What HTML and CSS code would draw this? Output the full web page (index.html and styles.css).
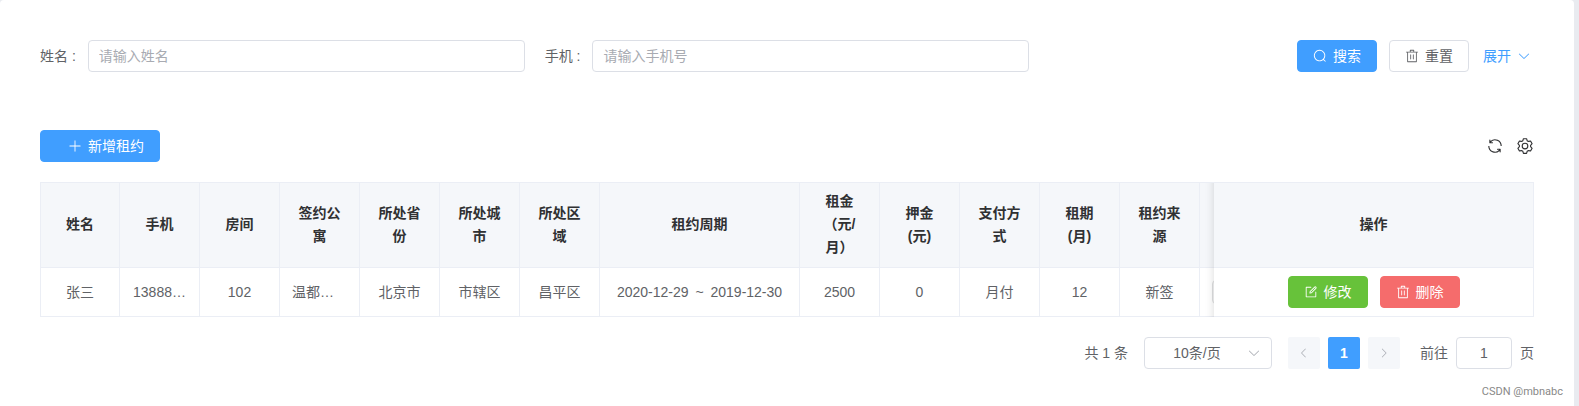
FILE: index.html
```html
<!DOCTYPE html>
<html lang="zh-CN">
<head>
    <meta charset="UTF-8">
    <meta name="viewport" content="width=device-width, initial-scale=1.0">
    <title>租约管理</title>
    <link rel="stylesheet" href="styles.css">
</head>
<body>
    <!-- 图标 -->
    <svg class="icon-defs" aria-hidden="true">
        <symbol id="icon-search" viewBox="0 0 1024 1024"><path d="M795.904 750.72l124.992 124.928a32 32 0 0 1-45.248 45.248L750.656 795.904a416 416 0 1 1 45.248-45.248zM480 832a352 352 0 1 0 0-704 352 352 0 0 0 0 704z"/></symbol>
        <symbol id="icon-delete" viewBox="0 0 1024 1024"><path d="M160 256H96a32 32 0 0 1 0-64h256V95.936a32 32 0 0 1 32-32h256a32 32 0 0 1 32 32V192h256a32 32 0 1 1 0 64h-64v672a32 32 0 0 1-32 32H192a32 32 0 0 1-32-32V256zm448-64v-64H416v64h192zM224 896h576V256H224v640zm192-128a32 32 0 0 1-32-32V416a32 32 0 0 1 64 0v320a32 32 0 0 1-32 32zm192 0a32 32 0 0 1-32-32V416a32 32 0 0 1 64 0v320a32 32 0 0 1-32 32z"/></symbol>
        <symbol id="icon-down" viewBox="0 0 1024 1024"><path d="M831.872 340.864 512 652.672 192.128 340.864a30.592 30.592 0 0 0-42.752 0 29.12 29.12 0 0 0 0 41.6L489.664 714.24a32 32 0 0 0 44.672 0l340.288-331.712a29.12 29.12 0 0 0 0-41.728 30.592 30.592 0 0 0-42.752 0z"/></symbol>
        <symbol id="icon-left" viewBox="0 0 1024 1024"><path d="M609.408 149.376 277.76 489.6a32 32 0 0 0 0 44.672l331.648 340.352a29.12 29.12 0 0 0 41.728 0 30.592 30.592 0 0 0 0-42.752L339.264 511.936l311.872-319.872a30.592 30.592 0 0 0 0-42.688 29.12 29.12 0 0 0-41.728 0z"/></symbol>
        <symbol id="icon-right" viewBox="0 0 1024 1024"><path d="M340.864 149.312a30.592 30.592 0 0 0 0 42.752L652.736 512 340.864 831.872a30.592 30.592 0 0 0 0 42.752 29.12 29.12 0 0 0 41.728 0L714.24 534.336a32 32 0 0 0 0-44.672L382.592 149.376a29.12 29.12 0 0 0-41.728 0z"/></symbol>
        <symbol id="icon-plus" viewBox="0 0 1024 1024"><path d="M480 480V128a32 32 0 0 1 64 0v352h352a32 32 0 1 1 0 64H544v352a32 32 0 1 1-64 0V544H128a32 32 0 0 1 0-64h352z"/></symbol>
        <symbol id="icon-refresh" viewBox="0 0 1024 1024"><path d="M771.776 794.88A384 384 0 0 1 128 512h64a320 320 0 0 0 555.712 216.448H654.72a32 32 0 1 1 0-64h149.056a32 32 0 0 1 32 32v148.928a32 32 0 1 1-64 0v-50.56zM276.288 295.616h92.992a32 32 0 0 1 0 64H220.16a32 32 0 0 1-32-32V178.56a32 32 0 0 1 64 0v50.56A384 384 0 0 1 896.128 512h-64a320 320 0 0 0-555.776-216.384z"/></symbol>
        <symbol id="icon-edit" viewBox="0 0 1024 1024"><path d="M832 512a32 32 0 1 1 64 0v352a32 32 0 0 1-32 32H160a32 32 0 0 1-32-32V160a32 32 0 0 1 32-32h352a32 32 0 0 1 0 64H192v640h640V512z"/><path d="m469.952 554.24 52.8-7.552L847.104 222.4a32 32 0 1 0-45.248-45.248L477.44 501.44l-7.552 52.8zm422.4-422.4a96 96 0 0 1 0 135.808l-331.84 331.84a32 32 0 0 1-18.112 9.088L436.8 623.68a32 32 0 0 1-36.224-36.224l15.104-105.6a32 32 0 0 1 9.024-18.112l331.904-331.84a96 96 0 0 1 135.744 0z"/></symbol>
        <symbol id="icon-setting" viewBox="0 0 1024 1024"><path d="M600.704 64a32 32 0 0 1 30.464 22.208l35.2 109.376c14.784 7.232 28.928 15.36 42.432 24.512l112.384-24.192a32 32 0 0 1 34.432 15.36L944.32 364.8a32 32 0 0 1-4.032 37.504l-77.12 85.12a357.12 357.12 0 0 1 0 49.024l77.12 85.248a32 32 0 0 1 4.032 37.504l-88.704 153.6a32 32 0 0 1-34.432 15.296L708.8 803.904c-13.44 9.088-27.648 17.28-42.368 24.512l-35.264 109.376A32 32 0 0 1 600.704 960H423.296a32 32 0 0 1-30.464-22.208L357.696 828.48a351.616 351.616 0 0 1-42.56-24.64l-112.32 24.256a32 32 0 0 1-34.432-15.36L79.68 659.2a32 32 0 0 1 4.032-37.504l77.12-85.248a357.12 357.12 0 0 1 0-48.896l-77.12-85.248A32 32 0 0 1 79.68 364.8l88.704-153.6a32 32 0 0 1 34.432-15.296l112.32 24.256c13.568-9.152 27.776-17.408 42.56-24.64l35.2-109.312A32 32 0 0 1 423.232 64H600.64zm-23.424 64H446.72l-36.352 113.088-24.512 11.968a294.113 294.113 0 0 0-34.816 20.096l-22.656 15.36-116.224-25.088-65.28 113.152 79.68 88.192-1.92 27.136a293.12 293.12 0 0 0 0 40.192l1.92 27.136-79.808 88.192 65.344 113.152 116.224-25.024 22.656 15.296a294.113 294.113 0 0 0 34.816 20.096l24.512 11.968L446.72 896h130.688l36.48-113.152 24.448-11.904a288.282 288.282 0 0 0 34.752-20.096l22.592-15.296 116.288 25.024 65.28-113.152-79.744-88.192 1.92-27.136a293.12 293.12 0 0 0 0-40.256l-1.92-27.136 79.808-88.128-65.344-113.152-116.288 24.96-22.592-15.232a287.616 287.616 0 0 0-34.752-20.096l-24.448-11.904L577.344 128zM512 320a192 192 0 1 1 0 384 192 192 0 0 1 0-384zm0 64a128 128 0 1 0 0 256 128 128 0 0 0 0-256z"/></symbol>
    </svg>

    <main class="card">
        <!-- 搜索栏 -->
        <form class="search-form">
            <div class="form-item">
                <label for="name">姓名 :</label>
                <input class="input" id="name" type="text" placeholder="请输入姓名">
            </div>
            <div class="form-item">
                <label for="phone">手机 :</label>
                <input class="input" id="phone" type="text" placeholder="请输入手机号">
            </div>
            <div class="form-buttons">
                <button type="button" class="button primary"><svg class="icon"><use href="#icon-search"/></svg>搜索</button>
                <button type="reset" class="button"><svg class="icon"><use href="#icon-delete"/></svg>重置</button>
                <button type="button" class="button link">展开<svg class="icon"><use href="#icon-down"/></svg></button>
            </div>
        </form>

        <div class="toolbar">
            <button type="button" class="button primary add-button"><svg class="icon"><use href="#icon-plus"/></svg>新增租约</button>
            <div class="tools">
                <button type="button" class="tool" aria-label="刷新"><svg class="icon"><use href="#icon-refresh"/></svg></button>
                <button type="button" class="tool" aria-label="设置"><svg class="icon"><use href="#icon-setting"/></svg></button>
            </div>
        </div>

        <!-- 租约表格 -->
        <div class="table-wrapper">
            <table class="table">
                <colgroup>
                    <col class="col" span="7">
                    <col class="col-period">
                    <col class="col" span="5">
                    <col class="col-status">
                    <col class="col-action">
                </colgroup>
                <thead>
                    <tr>
                        <th>姓名</th>
                        <th>手机</th>
                        <th>房间</th>
                        <th>签约公寓</th>
                        <th>所处省份</th>
                        <th>所处城市</th>
                        <th>所处区域</th>
                        <th>租约周期</th>
                        <th>租金<br>（元/<br>月）</th>
                        <th>押金<br>(元)</th>
                        <th>支付方式</th>
                        <th>租期<br>(月)</th>
                        <th>租约来源</th>
                        <th></th>
                        <th class="fixed">操作</th>
                    </tr>
                </thead>
                <tbody>
                    <tr>
                        <td>张三</td>
                        <td>13888…</td>
                        <td>102</td>
                        <td class="left">温都…</td>
                        <td>北京市</td>
                        <td>市辖区</td>
                        <td>昌平区</td>
                        <td>2020-12-29 <span class="to">~</span> 2019-12-30</td>
                        <td>2500</td>
                        <td>0</td>
                        <td>月付</td>
                        <td>12</td>
                        <td>新签</td>
                        <td><span class="tag"></span></td>
                        <td class="fixed">
                            <div class="actions">
                                <button type="button" class="button success"><svg class="icon"><use href="#icon-edit"/></svg>修改</button>
                                <button type="button" class="button danger"><svg class="icon"><use href="#icon-delete"/></svg>删除</button>
                            </div>
                        </td>
                    </tr>
                </tbody>
            </table>
        </div>

        <!-- 分页 -->
        <nav class="pagination" aria-label="分页">
            <span>共 1 条</span>
            <div class="page-size">
                <select class="input" aria-label="每页条数">
                    <option>10条/页</option>
                </select>
                <svg class="icon"><use href="#icon-down"/></svg>
            </div>
            <div class="pager">
                <button type="button" class="page" aria-label="上一页" disabled><svg class="icon"><use href="#icon-left"/></svg></button>
                <button type="button" class="page active">1</button>
                <button type="button" class="page" aria-label="下一页" disabled><svg class="icon"><use href="#icon-right"/></svg></button>
            </div>
            <div class="jump">
                <label for="page-number">前往</label>
                <input class="input" id="page-number" type="text" value="1">
                <span>页</span>
            </div>
        </nav>
        <span class="watermark">CSDN @mbnabc</span>
    </main>
</body>
</html>
```

FILE: styles.css
```css
* {
    box-sizing: border-box;
}

body {
    margin: 0;
    padding-right: 5px;
    background-color: #e9ebf0;
    color: #606266;
    font-family: "Liberation Sans", "Noto Sans CJK SC", sans-serif;
    font-size: 14px;
    line-height: 23px;
}

button, input, select {
    font-family: inherit;
    font-size: 14px;
    line-height: 23px;
    color: #606266;
}

.icon-defs {
    display: none;
}

.icon {
    width: 14px;
    height: 14px;
    flex: none;
    fill: currentColor;
}

.card {
    position: relative;
    min-height: 100vh;
    padding: 40px 40px 36px;
    background-color: white;
    border-radius: 4px 4px 0 0;
}

/* 搜索栏 */
.search-form {
    display: grid;
    grid-template-columns: repeat(3, 1fr);
    gap: 20px;
    margin-bottom: 58px;
}

.form-item {
    display: flex;
    align-items: center;
    gap: 12px;
}

.form-item label {
    white-space: nowrap;
}

.input {
    width: 100%;
    min-width: 0;
    height: 32px;
    padding: 0 10px;
    border: 1px solid #dcdfe6;
    border-radius: 4px;
    background-color: white;
    outline: none;
}

.input::placeholder {
    color: #a8abb2;
}

.form-buttons {
    display: flex;
    justify-content: flex-end;
    gap: 12px;
}

.button {
    display: inline-flex;
    align-items: center;
    justify-content: center;
    gap: 6px;
    height: 32px;
    padding: 0 15px;
    border: 1px solid #dcdfe6;
    border-radius: 4px;
    background-color: white;
    white-space: nowrap;
    cursor: pointer;
}

.primary {
    border-color: #409eff;
    background-color: #409eff;
    color: white;
}

.success {
    border-color: #67c23a;
    background-color: #67c23a;
    color: white;
}

.danger {
    border-color: #f56c6c;
    background-color: #f56c6c;
    color: white;
}

.link {
    padding: 0 3px 0 2px;
    border: none;
    background: none;
    color: #409eff;
}

.toolbar {
    display: flex;
    align-items: center;
    justify-content: space-between;
    margin-bottom: 20px;
}

.add-button {
    padding-left: 27px;
}

.tools {
    display: flex;
    gap: 12px;
}

.tool {
    display: flex;
    padding: 0;
    border: none;
    background: none;
    color: #303133;
    cursor: pointer;
}

.tool .icon {
    width: 18px;
    height: 18px;
}

/* 表格 */
.table-wrapper {
    overflow: hidden;
}

.table {
    width: 100%;
    min-width: 1640px;
    table-layout: fixed;
    border-spacing: 0;
}

.col {
    width: 80px;
}

.col-period {
    width: 200px;
}

.col-action {
    width: 320px;
}

.table th, .table td {
    padding: 8px 12px;
    border-right: 1px solid #ebeef5;
    border-bottom: 1px solid #ebeef5;
    background-color: white;
    text-align: center;
}

.table th {
    border-top: 1px solid #ebeef5;
    padding-top: 7px;
    background-color: #f5f7fa;
    color: #303133;
    text-spacing-trim: space-all;
}

.table th:first-child, .table td:first-child {
    border-left: 1px solid #ebeef5;
}

.table td.left {
    text-align: left;
}

.to {
    margin: 0 3px;
}

.table .fixed {
    position: sticky;
    right: 0;
}

.fixed::before {
    content: "";
    position: absolute;
    top: 0;
    bottom: -1px;
    left: -10px;
    width: 10px;
    box-shadow: inset -10px 0 10px -10px rgba(0, 0, 0, 0.15);
}

.tag {
    display: block;
    width: 48px;
    height: 24px;
    border: 1px solid #dedfe0;
    border-radius: 4px;
    background-color: #f4f4f5;
}

.actions {
    display: flex;
    justify-content: center;
    gap: 12px;
}

/* 分页 */
.pagination {
    display: flex;
    align-items: center;
    justify-content: flex-end;
    gap: 16px;
    margin-top: 20px;
}

.page-size {
    position: relative;
    width: 128px;
}

.page-size select {
    display: block;
    padding: 0 22px 0 0;
    appearance: none;
    text-align: center;
    text-align-last: center;
}

.page-size .icon {
    position: absolute;
    top: 9px;
    right: 11px;
    color: #a8abb2;
    pointer-events: none;
}

.pager, .jump {
    display: flex;
    align-items: center;
    gap: 8px;
}

.jump {
    margin-left: 4px;
}

.jump .input {
    width: 56px;
    text-align: center;
}

.page {
    display: flex;
    align-items: center;
    justify-content: center;
    width: 32px;
    height: 32px;
    padding: 0;
    border: none;
    border-radius: 2px;
    background-color: #f5f7fa;
    color: #a8abb2;
}

.page.active {
    background-color: #409eff;
    color: white;
    font-weight: bold;
}

.page .icon {
    width: 12px;
    height: 12px;
}

.watermark {
    position: absolute;
    right: 11px;
    bottom: 3px;
    color: #888888;
    font-family: Roboto, sans-serif;
    font-size: 11px;
}
```
